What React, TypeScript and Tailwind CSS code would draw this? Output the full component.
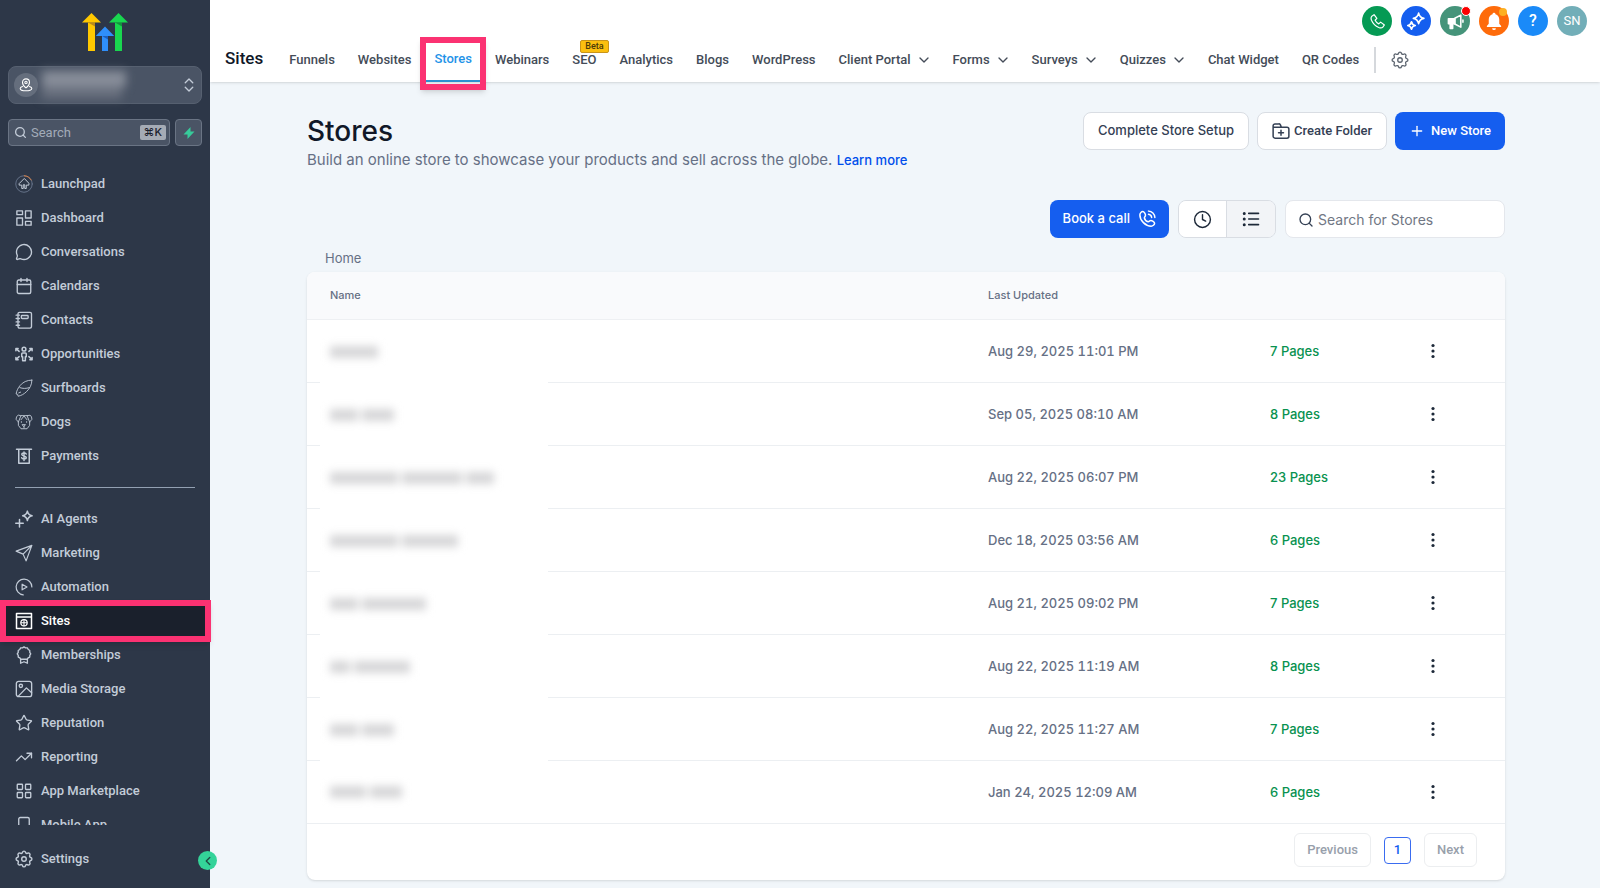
import { useState, type ReactNode } from "react";
import {
  Calendar,
  ChevronDown,
  ChevronLeft,
  ChevronsUpDown,
  Clock,
  LayoutGrid,
  MessageCircle,
  Plus,
  Search,
  Smartphone,
  Star,
  TrendingUp,
} from "lucide-react";

interface NavItem {
  label: string;
  icon: ReactNode;
}

interface Tab {
  label: string;
  hasMenu?: boolean;
  badge?: string;
}

interface Store {
  updated: string;
  pages: number;
  // widths of the masked words in the name column
  mask: string[];
}

interface GlyphProps {
  children: ReactNode;
  className?: string;
  width?: number;
}

function Glyph({ children, className = "size-[18px]", width = 1.8 }: GlyphProps) {
  return (
    <svg
      viewBox="0 0 24 24"
      className={className}
      fill="none"
      stroke="currentColor"
      strokeWidth={width}
      strokeLinecap="round"
      strokeLinejoin="round"
      aria-hidden="true"
    >
      {children}
    </svg>
  );
}

function GearIcon({ className, width }: { className?: string; width?: number }) {
  return (
    <Glyph className={className} width={width}>
      <g transform="translate(12 12) scale(1.17) translate(-12 -12)">
        <path d="M10.325 4.317c.426-1.756 2.924-1.756 3.35 0a1.724 1.724 0 002.573 1.066c1.543-.94 3.31.826 2.37 2.37a1.724 1.724 0 001.065 2.572c1.756.426 1.756 2.924 0 3.35a1.724 1.724 0 00-1.066 2.573c.94 1.543-.826 3.31-2.37 2.37a1.724 1.724 0 00-2.572 1.065c-.426 1.756-2.924 1.756-3.35 0a1.724 1.724 0 00-2.573-1.066c-1.543.94-3.31-.826-2.37-2.37a1.724 1.724 0 00-1.065-2.572c-1.756-.426-1.756-2.924 0-3.35a1.724 1.724 0 001.066-2.573c-.94-1.543.826-3.31 2.37-2.37.996.608 2.296.07 2.572-1.065z" />
        <circle cx="12" cy="12" r="2.6" />
      </g>
    </Glyph>
  );
}

const lucide = "size-[18px]";

const mainNav: NavItem[] = [
  {
    label: "Launchpad",
    icon: (
      <Glyph width={1.3}>
        <circle cx="12" cy="12" r="11" stroke="#66738a" />
        <path d="M12.5 1A11 11 0 0 1 21.6 6.6" stroke="#dd8043" />
        <path d="M12 5 5.500 11.500v2H9V18h2v-5h2v5h2v-4.500h3.500v-2z" />
      </Glyph>
    ),
  },
  {
    label: "Dashboard",
    icon: (
      <Glyph>
        <path d="M2.5 2.5h7.5v5H2.5zM14 2.5h7.5v9.5H14zM2.5 12H10v9.5H2.5zM14 16.5h7.5v5H14z" />
      </Glyph>
    ),
  },
  { label: "Conversations", icon: <MessageCircle className={lucide} strokeWidth={1.8} /> },
  { label: "Calendars", icon: <Calendar className={lucide} strokeWidth={1.8} /> },
  {
    label: "Contacts",
    icon: (
      <Glyph>
        <rect x="4" y="1.8" width="18" height="21" rx="2" />
        <rect x="8.5" y="6" width="9" height="4" rx="1" />
        <path d="M1.5 5.5H6M1.5 10H6M1.5 14.5H6M1.5 19H6" />
      </Glyph>
    ),
  },
  {
    label: "Opportunities",
    icon: (
      <Glyph width={2}>
        <circle cx="12" cy="5.5" r="2.5" />
        <path d="M10 10.5h4a1 1 0 0 1 1 1v4h-1.2V21h-3.6v-5.5H9v-4a1 1 0 0 1 1-1z" />
        <path d="M1.2 7.5V4.5h3M1.5 4.8 5.5 8.5M22.8 7.5V4.5h-3M22.5 4.8 18.5 8.5M1.2 16.5v3h3M1.5 19.2 5.5 15.5M22.8 16.5v3h-3M22.5 19.2 18.5 15.5" />
      </Glyph>
    ),
  },
  {
    label: "Surfboards",
    icon: (
      <Glyph width={1.2}>
        <path d="M22.5 1.5C16 1.5 10.5 4 6.5 9 4 12.2 2 16 1.5 20l2 .5.7 2.500c4-.8 8-3 11-6 4.800-4.500 7.300-9.500 7.300-15.500zM6.500 11.500c4 1.500 8 1.500 12.500 0M5 18.500l2.500-1" />
      </Glyph>
    ),
  },
  {
    label: "Dogs",
    icon: (
      <Glyph width={1.2}>
        <path d="M8 3.500h8l4-.5c1.500.5 2.500 3 2.500 5.500l-3 3.500v4.500L16 21H8l-3.500-4.500V12l-3-3.500C1.500 6 2.500 3.500 4 3zM8 3.500 4.500 12M16 3.500 19.500 12M8 9l4-5 4 5M10 15.500h4l-2 2.200zM12 17.700V20M8.500 11.500v1M15.500 11.500v1" />
      </Glyph>
    ),
  },
  {
    label: "Payments",
    icon: (
      <Glyph width={2}>
        <path d="M2 3h20M5 3v18.5h14V3" />
        <path d="M15 9.3c-.5-1-1.6-1.4-3-1.4-1.7 0-2.9.7-2.9 2 0 2.7 5.9 1.3 5.9 4.2 0 1.3-1.2 2-3 2-1.6 0-2.7-.6-3.1-1.7M12 6.5V18" />
      </Glyph>
    ),
  },
];

const toolNav: NavItem[] = [
  {
    label: "AI Agents",
    icon: (
      <Glyph width={2}>
        <path d="M16.5 1.5c.8 4 2.3 5.500 6.300 6.300-4 .8-5.500 2.300-6.300 6.300-.8-4-2.300-5.500-6.300-6.300 4-.8 5.500-2.300 6.300-6.300zM6 12.500v10M1 17.500h10" />
      </Glyph>
    ),
  },
  {
    label: "Marketing",
    icon: (
      <Glyph width={1.6}>
        <path d="M22.5 1.8 14.8 22.5l-4-9L1.5 9.5zM22.5 1.8 10.8 13.5" />
      </Glyph>
    ),
  },
  {
    label: "Automation",
    icon: (
      <Glyph width={1.6}>
        <path d="M11 22.5A10.5 10.5 0 1 1 22.5 12M9.5 8.2l6.5 3.8-6.5 3.8z" />
      </Glyph>
    ),
  },
  {
    label: "Sites",
    icon: (
      <Glyph width={2}>
        <path d="M2 2h20v20H2zM2 6.5h20" />
        <circle cx="12" cy="14.3" r="4.2" strokeWidth={1.6} />
        <path d="M8 14.3h8M12 10.3v8" strokeWidth={1.4} />
      </Glyph>
    ),
  },
  {
    label: "Memberships",
    icon: (
      <Glyph>
        <path d="M12 1.2l2 1.300h2.500l1.200 2.200 2 1.300v2.500L21 10.500l-1.300 2v2.200l-2.200 1.100-1 1.800h-9l-1-1.800-2.200-1.100v-2.200L3 10.500l1.300-2V6l2-1.300 1.200-2.200H10z" />
        <path d="M7.500 17.600V23l4.500-2 4.500 2v-5.400" />
      </Glyph>
    ),
  },
  {
    label: "Media Storage",
    icon: (
      <Glyph>
        <rect x="1.8" y="1.8" width="20.4" height="20.4" rx="3" />
        <circle cx="7.8" cy="7.8" r="2.2" />
        <path d="M4.5 21.5 15.2 10.5l7 6.5" />
      </Glyph>
    ),
  },
  { label: "Reputation", icon: <Star className={lucide} strokeWidth={1.8} /> },
  {
    label: "Reporting",
    icon: <TrendingUp className={lucide} strokeWidth={1.8} />,
  },
  { label: "App Marketplace", icon: <LayoutGrid className={lucide} strokeWidth={1.8} /> },
  { label: "Mobile App", icon: <Smartphone className={lucide} strokeWidth={1.8} /> },
];

const tabs: Tab[] = [
  { label: "Funnels" },
  { label: "Websites" },
  { label: "Stores" },
  { label: "Webinars" },
  { label: "SEO", badge: "Beta" },
  { label: "Analytics" },
  { label: "Blogs" },
  { label: "WordPress" },
  { label: "Client Portal", hasMenu: true },
  { label: "Forms", hasMenu: true },
  { label: "Surveys", hasMenu: true },
  { label: "Quizzes", hasMenu: true },
  { label: "Chat Widget" },
  { label: "QR Codes" },
];

const stores: Store[] = [
  { updated: "Aug 29, 2025 11:01 PM", pages: 7, mask: ["w-12"] },
  { updated: "Sep 05, 2025 08:10 AM", pages: 8, mask: ["w-7", "w-8"] },
  { updated: "Aug 22, 2025 06:07 PM", pages: 23, mask: ["w-[68px]", "w-[60px]", "w-7"] },
  { updated: "Dec 18, 2025 03:56 AM", pages: 6, mask: ["w-[68px]", "w-14"] },
  { updated: "Aug 21, 2025 09:02 PM", pages: 7, mask: ["w-7", "w-16"] },
  { updated: "Aug 22, 2025 11:19 AM", pages: 8, mask: ["w-5", "w-14"] },
  { updated: "Aug 22, 2025 11:27 AM", pages: 7, mask: ["w-7", "w-8"] },
  { updated: "Jan 24, 2025 12:09 AM", pages: 6, mask: ["w-9", "w-8"] },
];

function Logo() {
  return (
    <svg viewBox="0 0 46 38" className="h-[38px] w-[46px]" aria-label="HighLevel">
      <path d="M9.5 0 19 9.5H0z" fill="#ffc800" />
      <path d="M6 9.5h7V38H6z" fill="#ffc800" />
      <path d="M6 9.5h7v4z" fill="#b98a1a" />
      <path d="M36.5 0 46 9.5H27z" fill="#19d64f" />
      <path d="M33 9.5h7V38h-7z" fill="#19d64f" />
      <path d="M33 9.5h7v4z" fill="#12913c" />
      <path d="M23 13.5 32.2 23H13.8z" fill="#2f8ffb" />
      <path d="M20 23h6v15h-6z" fill="#2f8ffb" />
      <path d="M20 23h6v3.5z" fill="#1a5fc0" />
    </svg>
  );
}

function SidebarLink({ label, icon, active }: NavItem & { active?: boolean }) {
  return (
    <li className="relative">
      <a
        href="#"
        aria-current={active ? "page" : undefined}
        className={
          active
            ? "flex h-[34px] items-center gap-2 bg-[#1a202c] pl-[15px] text-white"
            : "flex h-[34px] items-center gap-2 pl-[15px]"
        }
      >
        {icon}
        {label}
      </a>
      {active && (
        <span className="pointer-events-none absolute -top-1 -right-px -bottom-1 left-0 border-[6px] border-[#fb3272] shadow-md" />
      )}
    </li>
  );
}

function Sidebar() {
  return (
    <aside className="relative z-20 flex h-screen w-[210px] shrink-0 flex-col bg-[#2d3748] font-['Roboto',sans-serif] text-[13px] font-medium text-[#c3ccd8]">
      <div className="flex justify-center pt-[13px]">
        <Logo />
      </div>
      <div className="px-2 pt-[15px]">
        <button
          type="button"
          aria-label="Switch account"
          className="flex h-[38px] w-full items-center rounded-lg border border-[#566070] bg-[#4a5465] pr-[3px] pl-[5px]"
        >
          <span className="flex size-6 items-center justify-center rounded-full bg-[#656e7d] text-white">
            <Glyph className="size-[14px]" width={1.8}>
              <path d="M12 17s-6-5-6-9.500a6 6 0 0 1 12 0C18 12 12 17 12 17z" />
              <circle cx="12" cy="7.5" r="2" />
              <path d="M6 14.5c-3 .8-4 2-4 3.500 0 2.500 4.500 4 10 4s10-1.500 10-4c0-1.500-1-2.700-4-3.500" />
            </Glyph>
          </span>
          <span className="ml-1 flex flex-col blur-[5px]">
            <span className="h-4 w-[84px] bg-[#878d99]" />
            <span className="h-3 w-20 bg-[#686f7d]" />
          </span>
          <ChevronsUpDown className="ml-auto size-[18px]" strokeWidth={1.8} />
        </button>
        <div className="mt-[15px] flex gap-[5px]">
          <div className="flex h-[27px] min-w-0 flex-1 items-center gap-1 rounded border border-[#6a7484] bg-[#4a5465] pr-[3px] pl-[5px]">
            <Search className="size-[13px] shrink-0" strokeWidth={2.4} />
            <input
              type="text"
              aria-label="Search"
              placeholder="Search"
              className="w-full min-w-0 font-normal placeholder:text-[#a3acb9] focus:outline-none"
            />
            <kbd className="rounded-xs bg-[#a5abb5] px-1 font-['Inter','DejaVu_Sans',sans-serif] text-[11px] leading-[15px] text-[#1a202c]">
              ⌘K
            </kbd>
          </div>
          <button
            type="button"
            aria-label="Quick actions"
            className="flex size-[27px] items-center justify-center rounded border border-[#6a7484] bg-[#4a5465]"
          >
            <svg viewBox="0 0 24 24" className="size-3" fill="#37ca9a" aria-hidden="true">
              <path d="M15 0v9h8L9 24v-9H1z" />
            </svg>
          </button>
        </div>
      </div>

      <nav className="mt-[21px] min-h-0 flex-1 overflow-x-visible overflow-y-clip">
        <ul>
          {mainNav.map((item) => (
            <SidebarLink key={item.label} {...item} />
          ))}
        </ul>
        <hr className="mx-[15px] my-[14px] border-[#93a0b2]" />
        <ul>
          {toolNav.map((item) => (
            <SidebarLink key={item.label} {...item} active={item.label === "Sites"} />
          ))}
        </ul>
      </nav>

      <a href="#" className="flex h-[63px] shrink-0 items-center gap-2 pt-1 pl-[15px]">
        <GearIcon width={1.6} />
        Settings
      </a>
      <button
        type="button"
        aria-label="Collapse sidebar"
        className="absolute right-[-7px] bottom-[18px] flex size-[19px] items-center justify-center rounded-full bg-[#34d399] text-[#1f4a44]"
      >
        <ChevronLeft className="size-3.5" strokeWidth={2.4} />
      </button>
    </aside>
  );
}

function HeaderActions() {
  const round = "relative flex size-[30px] items-center justify-center rounded-full text-white";
  return (
    <div className="flex justify-end gap-[9px] pt-1.5 pr-[13px]">
      <button type="button" aria-label="Phone" className={`${round} bg-[#059a54]`}>
        <Glyph className="size-[15px]" width={1.9}>
          <path d="M3 3.5 6.5 1l4.500 6-2.800 3c1.300 2.600 3.200 4.500 5.800 5.800l3-2.800 6 4.500-2.500 3.500c-1.500 1.600-4 1.600-6.500.6C8.500 19.200 4.800 15.500 2.400 10 1.400 7.500 1.600 5 3 3.500z" />
        </Glyph>
      </button>
      <button type="button" aria-label="AI assistant" className={`${round} bg-[#155eef]`}>
        <Glyph className="size-[18px]" width={2.2}>
          <path d="M15.500 1.500c.9 4.500 2.500 6.100 7 7-4.500.9-6.100 2.500-7 7-.9-4.500-2.500-6.100-7-7 4.500-.9 6.100-2.500 7-7zM6 13c.6 3 2 4.400 5 5-3 .6-4.400 2-5 5-.6-3-2-4.400-5-5 3-.6 4.400-2 5-5z" />
        </Glyph>
      </button>
      <button type="button" aria-label="Announcements" className={`${round} bg-[#45947a]`}>
        <Glyph className="size-[17px]" width={2.2}>
          <path d="M11 7.500 19.500 3v17L11 15.500z" />
          <path d="M2 8h9v7H8v7H4.500v-7H2z" fill="currentColor" />
          <path d="M22.500 10v3" />
        </Glyph>
        <span className="absolute top-0 -right-px size-2.5 rounded-full border border-white bg-[#fb0000]" />
      </button>
      <button type="button" aria-label="Notifications" className={`${round} bg-[#fe6b0b]`}>
        <svg viewBox="0 0 24 24" className="size-[18px]" fill="currentColor" aria-hidden="true">
          <path d="M12 1a2 2 0 0 1 2 1.9c3.200.9 5 3.400 5 7.100v5.500l2.500 3v1.500h-19v-1.500l2.500-3V10c0-3.700 1.800-6.200 5-7.100A2 2 0 0 1 12 1zM9.500 21.500h5a2.500 2.500 0 0 1-5 0z" />
        </svg>
        <span className="absolute top-0.5 right-0.5 size-2 rounded-full bg-[#fdb022]" />
      </button>
      <button type="button" aria-label="Help" className={`${round} bg-[#1a8af8]`}>
        <span className="font-['Roboto',sans-serif] text-base font-medium">?</span>
      </button>
      <button type="button" className={`${round} bg-[#72aeb8]`}>
        <span className="font-['Roboto',sans-serif] text-[13px]">SN</span>
      </button>
    </div>
  );
}

function Header() {
  return (
    <header className="relative z-10 h-[82px] bg-white font-['Roboto',sans-serif] shadow">
      <HeaderActions />
      <div className="flex h-[46px] items-center pl-[15px]">
        <h2 className="text-[17px] font-medium text-[#101828]">Sites</h2>
        <nav className="ml-[26px] flex h-full items-center gap-[23px] text-[13px] font-medium whitespace-nowrap text-[#444c58]">
          {tabs.map((tab) => (
            <a
              key={tab.label}
              href="#"
              className={
                tab.label === "Stores"
                  ? "relative flex h-full items-center text-[#1f93e8]"
                  : "relative flex h-full items-center pt-0.5"
              }
            >
              {tab.label}
              {tab.hasMenu && <ChevronDown className="-mr-0.5 ml-[5px] size-4" />}
              {tab.badge && (
                <span className="absolute top-1 left-2 rounded-xs border border-[#c9951a] bg-[#fbbf0f] px-1 text-[9px] leading-[11px] text-[#4a3a08]">
                  {tab.badge}
                </span>
              )}
              {tab.label === "Stores" && (
                <span className="pointer-events-none absolute top-px -right-3.5 -bottom-2 -left-3.5 flex items-end border-[6px] border-[#fb3272] pb-0.5 shadow-md">
                  <span className="h-0.5 w-full bg-[#2b8fd0]" />
                </span>
              )}
            </a>
          ))}
        </nav>
        <button
          type="button"
          aria-label="Sites settings"
          className="mt-0.5 ml-[15px] border-l-2 border-[#d5d8dc] py-1 pl-[15px] text-[#5d6570]"
        >
          <GearIcon width={1.5} />
        </button>
      </div>
    </header>
  );
}

function StoresTable() {
  return (
    <section className="overflow-hidden rounded-lg bg-white shadow">
      <table className="w-full table-fixed border-separate border-spacing-0 text-left text-[13px] text-[#667085]">
        <thead>
          <tr className="h-12 bg-[#f9fafc] text-[11px] [&>th]:border-b [&>th]:border-[#eef0f3] [&>th]:font-medium">
            <th className="pl-[23px]">Name</th>
            <th className="w-[282px] pl-[23px]">Last Updated</th>
            <th className="w-[163px] pl-[23px]" aria-label="Pages" />
            <th className="w-[95px]" aria-label="Actions" />
          </tr>
        </thead>
        <tbody>
          {stores.map((store, i) => (
            <tr key={store.updated} className="h-[63px] [&>td]:border-b [&>td]:border-[#eceff2]">
              <td className="py-0 pl-[13px]">
                <div
                  className={
                    i < stores.length - 1
                      ? "-mb-px flex h-[63px] w-[228px] items-center bg-white pl-2.5"
                      : "flex h-[62px] w-[228px] items-center bg-white pl-2.5"
                  }
                >
                  <span className="flex gap-1 blur-[4px]">
                    {store.mask.map((w, j) => (
                      <span key={j} className={`${w} h-3 bg-[#d6d6d8]`} />
                    ))}
                  </span>
                </div>
              </td>
              <td className="pt-0.5 pl-[23px] font-medium tabular-nums">{store.updated}</td>
              <td className="pt-0.5 pl-[23px] font-medium text-[#099250]">{store.pages} Pages</td>
              <td>
                <button
                  type="button"
                  aria-label="Store actions"
                  className="ml-[15px] flex size-4 items-center justify-center text-[#1d2939]"
                >
                  <svg viewBox="0 0 16 16" className="size-4" fill="currentColor" aria-hidden="true">
                    <circle cx="8" cy="2.5" r="1.6" />
                    <circle cx="8" cy="8" r="1.6" />
                    <circle cx="8" cy="13.5" r="1.6" />
                  </svg>
                </button>
              </td>
            </tr>
          ))}
        </tbody>
      </table>
      <div className="flex h-14 items-center justify-end gap-[13px] pr-7 pb-1 font-['Roboto',sans-serif] text-[13px] font-medium text-[#98a0ab]">
        <button type="button" className="h-[34px] rounded-md border border-[#eceef0] px-3" disabled>
          Previous
        </button>
        <button type="button" className="size-[27px] rounded-sm border border-[#3a6cf0] text-[#155eef]">
          1
        </button>
        <button type="button" className="h-[34px] rounded-md border border-[#eceef0] px-3" disabled>
          Next
        </button>
      </div>
    </section>
  );
}

export default function App() {
  const [view, setView] = useState<"recent" | "list">("list");
  const outlined =
    "flex h-[38px] items-center rounded-lg border border-[#d9dde3] bg-white px-[14px] text-[#344054]";

  return (
    <div className="flex h-screen overflow-hidden bg-[#f1f6fa] font-['Inter',sans-serif]">
      <Sidebar />
      <div className="min-w-0 flex-1">
        <Header />
        <main className="pt-[30px] pr-[95px] pl-[97px]">
          <div className="flex items-start justify-between">
            <div>
              <h1 className="text-[28px] leading-[38px] font-medium text-[#101828]">Stores</h1>
              <p className="text-[15px] leading-5 text-[#667085]">
                Build an online store to showcase your products and sell across the globe.{" "}
                <a href="#" className="text-[13px] font-medium text-[#004eeb]">
                  Learn more
                </a>
              </p>
            </div>
            <div className="flex gap-2 text-[13px] font-medium">
              <button type="button" className={outlined}>
                Complete Store Setup
              </button>
              <button type="button" className={`${outlined} gap-1 font-['Roboto',sans-serif]`}>
                <Glyph width={2}>
                  <path d="M1.5 19V5a2.500 2.500 0 0 1 2.500-2.500h5a2.500 2.500 0 0 1 2.200 1.300L12.500 7H20a2.500 2.500 0 0 1 2.500 2.500V19a2.500 2.500 0 0 1-2.500 2.500H4A2.500 2.500 0 0 1 1.500 19zM1.500 7h11M12 11v6.500M8.700 14.200h6.600" />
                </Glyph>
                Create Folder
              </button>
              <button
                type="button"
                className="flex h-[38px] items-center gap-1.5 rounded-lg bg-[#155eef] px-[14px] font-['Roboto',sans-serif] text-white"
              >
                <Plus className="size-4" />
                New Store
              </button>
            </div>
          </div>

          <div className="mt-[30px] flex justify-end gap-[9px]">
            <button
              type="button"
              className="flex h-[38px] items-center gap-2 rounded-lg bg-[#155eef] px-[13px] text-[13px] font-medium text-white"
            >
              Book a call
              <Glyph width={2}>
                <path d="M2.5 6.5C2.5 4.5 4.5 2 6.5 2c1.500 0 3.500 3.500 3.500 5 0 1.700-1.800 2.200-1.500 3.700.5 2.200 2.700 4.400 4.900 4.900 1.500.3 2-1.500 3.700-1.500 1.500 0 5 2 5 3.500 0 2-2.500 4-4.500 4-7.500 0-15.100-7.600-15.100-15.100zM14 1.500a9 9 0 0 1 8.500 8.500M14 5.800A4.800 4.800 0 0 1 18.200 10" />
              </Glyph>
            </button>
            <div className="flex h-[38px] overflow-hidden rounded-lg border border-[#d9dde3] text-[#1d2939]">
              <button
                type="button"
                aria-label="Recent"
                aria-pressed={view === "recent"}
                onClick={() => setView("recent")}
                className={`flex w-12 items-center justify-center border-r border-[#d9dde3] ${view === "recent" ? "bg-[#f2f4f7]" : "bg-white"}`}
              >
                <Clock className="size-[19px]" strokeWidth={1.8} />
              </button>
              <button
                type="button"
                aria-label="List view"
                aria-pressed={view === "list"}
                onClick={() => setView("list")}
                className={`flex w-12 items-center justify-center ${view === "list" ? "bg-[#f2f4f7]" : "bg-white"}`}
              >
                <Glyph width={2.2}>
                  <path d="M9 4.5h13M9 12h13M9 19.5h13" />
                  <path d="M3 4.5h.01M3 12h.01M3 19.5h.01" strokeWidth={4} />
                </Glyph>
              </button>
            </div>
            <label className="flex h-[38px] w-[220px] items-center gap-1 rounded-lg border border-[#e4e7ec] bg-white pt-px pl-3 text-[#344054]">
              <Search className="size-4 shrink-0" />
              <input
                type="text"
                aria-label="Search for Stores"
                placeholder="Search for Stores"
                className="w-full min-w-0 text-sm placeholder:text-[#717784] focus:outline-none"
              />
            </label>
          </div>

          <nav aria-label="Breadcrumb" className="mt-[10px] pl-[18px] text-[13px] leading-5 text-[#667085]">
            <a href="#">Home</a>
          </nav>
          <div className="mt-1">
            <StoresTable />
          </div>
        </main>
      </div>
    </div>
  );
}
